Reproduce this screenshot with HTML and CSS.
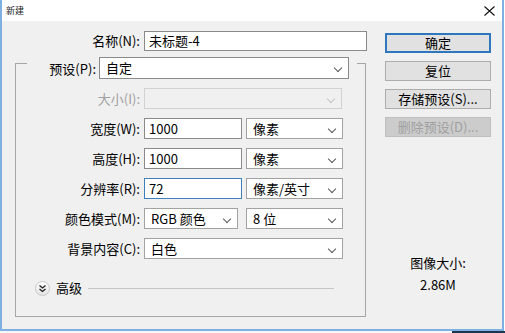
FILE: index.html
```html
<!DOCTYPE html>
<html lang="zh-CN">
<head>
  <meta charset="UTF-8">
  <meta name="viewport" content="width=device-width, initial-scale=1.0">
  <title>新建</title>
  <link rel="stylesheet" href="styles.css">
</head>
<body>
  <div class="window">
    <!-- Title bar -->
    <div class="titlebar">
      <span class="title">新建</span>
      <svg class="close" width="11" height="10" viewBox="0 0 11 10">
        <path d="M0.5 0.5 L10.5 9.5 M10.5 0.5 L0.5 9.5" stroke="#111" stroke-width="1.1" fill="none"/>
      </svg>
    </div>

    <div class="client">
      <div class="form">
        <div class="row name-row">
          <label class="lbl name-lbl">名称(N):</label>
          <div class="input name-input">未标题-4</div>
        </div>

        <div class="group">
          <div class="legend">
            <label class="legend-lbl">预设(P):</label>
            <div class="select preset">自定<span class="chev"></span></div>
          </div>

          <div class="row">
            <label class="lbl disabled">大小(I):</label>
            <div class="select size disabled"><span class="chev"></span></div>
          </div>

          <div class="row">
            <label class="lbl">宽度(W):</label>
            <div class="input num">1000</div>
            <div class="select unit">像素<span class="chev"></span></div>
          </div>

          <div class="row">
            <label class="lbl">高度(H):</label>
            <div class="input num">1000</div>
            <div class="select unit">像素<span class="chev"></span></div>
          </div>

          <div class="row">
            <label class="lbl">分辨率(R):</label>
            <div class="input num focused">72</div>
            <div class="select unit">像素/英寸<span class="chev"></span></div>
          </div>

          <div class="row">
            <label class="lbl">颜色模式(M):</label>
            <div class="select mode">RGB 颜色<span class="chev"></span></div>
            <div class="select unit bits">8 位<span class="chev"></span></div>
          </div>

          <div class="row">
            <label class="lbl">背景内容(C):</label>
            <div class="select bg">白色<span class="chev"></span></div>
          </div>

          <div class="advanced">
            <span class="adv-btn">
              <svg width="9" height="9" viewBox="0 0 9 9">
                <path d="M1.5 1.5 L4.5 4 L7.5 1.5 M1.5 5 L4.5 7.5 L7.5 5" stroke="#222" stroke-width="1.3" fill="none"/>
              </svg>
            </span>
            <span class="adv-text">高级</span>
            <span class="adv-line"></span>
          </div>
        </div>
      </div>

      <div class="side">
        <button class="btn default">确定</button>
        <button class="btn">复位</button>
        <button class="btn">存储预设(S)...</button>
        <button class="btn" disabled>删除预设(D)...</button>

        <div class="info">
          <div>图像大小:</div>
          <div>2.86M</div>
        </div>
      </div>
    </div>

    <div class="bottom"><span class="taskbar"></span></div>
  </div>
</body>
</html>
```

FILE: styles.css
```css
body {
  margin: 0;
  background: #ffffff;
  font-family: "Noto Sans CJK SC", "Noto Sans", sans-serif;
  font-size: 13px;
  color: #000;
}

.window {
  width: 505px;
  height: 333px;
  display: flex;
  flex-direction: column;
  overflow: hidden;
}

.titlebar {
  box-sizing: border-box;
  width: 504px;
  height: 21px;
  flex: none;
  display: flex;
  align-items: center;
  justify-content: space-between;
  background: #ffffff;
  border-left: 2px solid #7fb0e2;
  border-right: 2px solid #7fb0e2;
  padding: 0 7px 0 4px;
}

.title {
  font-size: 9px;
  line-height: 10px;
  color: #222;
}

.close {
  margin-top: 1px;
}

.client {
  width: 500px;
  height: 308px;
  flex: none;
  display: flex;
  background: #f0f0f0;
  border-left: 2px solid #7fb0e2;
  border-right: 2px solid #7fb0e2;
  border-bottom: 2px solid #7fb0e2;
}

.form {
  padding: 10px 0 0 13px;
}

.row {
  display: flex;
  align-items: center;
  height: 21px;
  margin-top: 9px;
}

.lbl {
  width: 124px;
  text-align: right;
  margin-right: 4px;
  line-height: 20px;
  white-space: nowrap;
}

.lbl.disabled {
  color: #a0a0a0;
}

.name-row {
  margin-top: 0;
  height: 20px;
}

.name-lbl {
  width: 125px;
}

.input,
.select {
  box-sizing: border-box;
  height: 21px;
  line-height: 19px;
  background: #ffffff;
  white-space: nowrap;
}

.input {
  border: 1px solid #8a8a8a;
  padding-left: 4px;
}

.name-input {
  width: 223px;
  height: 20px;
  line-height: 18px;
}

.input.num {
  width: 98px;
  margin-right: 4px;
}

.input.focused {
  border-color: #3e7fbd;
}

.select {
  position: relative;
  border: 1px solid #a2a2a2;
  padding-left: 6px;
}

.select.disabled {
  background: #f0f0f0;
  border-color: #d2d2d2;
}

.chev {
  position: absolute;
  right: 7px;
  top: 7px;
  width: 5px;
  height: 5px;
  border-right: 1px solid #5a5a5a;
  border-bottom: 1px solid #5a5a5a;
  transform: rotate(45deg);
}

.select.disabled .chev {
  border-color: #c4c4c4;
}

.group {
  box-sizing: border-box;
  width: 351px;
  height: 254px;
  margin-top: 12px;
  border: 1px solid #a6a6a6;
}

.legend {
  display: flex;
  align-items: center;
  width: 330px;
  height: 22px;
  margin: -7px 0 0 11px;
  background: #f0f0f0;
}

.legend-lbl {
  width: 69px;
  text-align: right;
  margin-right: 3px;
}

.preset {
  width: 250px;
  height: 22px;
  line-height: 20px;
  border-color: #8a8a8a;
}

.size {
  width: 198px;
}

.unit {
  width: 97px;
}

.mode {
  width: 94px;
  margin-right: 8px;
}

.bg {
  width: 199px;
}

.advanced {
  display: flex;
  align-items: center;
  height: 16px;
  margin: 21px 0 0 19px;
}

.adv-btn {
  box-sizing: border-box;
  width: 15px;
  height: 15px;
  border-radius: 50%;
  border: 1px solid #c8c8c8;
  background: linear-gradient(#ffffff, #e4e4e4);
  display: flex;
  align-items: center;
  justify-content: center;
}

.adv-text {
  margin-left: 6px;
  line-height: 16px;
}

.adv-line {
  width: 246px;
  height: 1px;
  margin-left: 6px;
  background: #c6c6c6;
}

.side {
  display: flex;
  flex-direction: column;
  width: 106px;
  margin-left: 18px;
  padding-top: 12px;
}

.btn {
  box-sizing: border-box;
  height: 20px;
  margin-bottom: 8px;
  padding: 0;
  border: 1px solid #adadad;
  background: #e1e1e1;
  font-family: inherit;
  font-size: 13px;
  line-height: 18px;
  color: #000;
}

.btn.default {
  border: 2px solid #2f77bd;
  line-height: 16px;
}

.btn:disabled {
  color: #a0a0a0;
  background: #cccccc;
  border-color: #bfbfbf;
}

.info {
  margin-top: 107px;
  text-align: center;
  line-height: 22px;
}

.bottom {
  height: 3px;
  flex: none;
  background: #f4f7fb;
  display: flex;
  justify-content: flex-end;
}

.taskbar {
  width: 53px;
  background: #1d3550;
}
```
